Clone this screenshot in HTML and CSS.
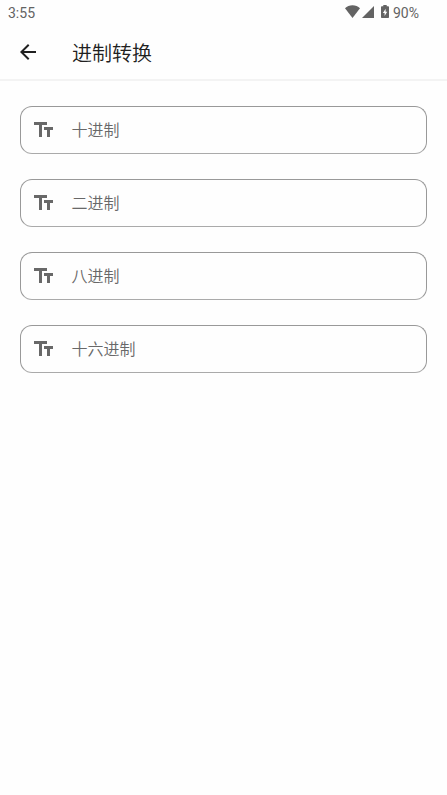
FILE: index.html
```html
<!DOCTYPE html>
<html lang="zh-CN">
<head>
<meta charset="utf-8">
<title>进制转换</title>
<link rel="stylesheet" href="styles.css">
</head>
<body>
<svg class="defs" aria-hidden="true"><symbol id="text-fields" viewBox="0 0 24 24"><path d="M3 4v3h5v12h3V7h5V4H3zm19 5h-9v3h3v7h3v-7h3V9z"/></symbol></svg>
<div class="status">
  <span class="clock">3:55</span>
  <svg class="wifi" viewBox="0 0 15 13"><path d="M7.500 13L0 3.200C1.900 1.300 4.600 .3 7.500 .3s5.600 1 7.500 2.900z"/></svg>
  <svg class="signal" viewBox="0 0 12 12"><path d="M12 0v12H0z"/></svg>
  <svg class="battery" viewBox="0 0 8 13"><path fill-rule="evenodd" d="M2.300 0h3.400v1.300H7.200q.8 0 .8.800v10.100q0 .8-.8.800H.8q-.8 0-.8-.8V2.100q0-.8.8-.8h1.500zM4.600 3.700L1.900 8h1.700v3L6.200 6.800H4.600z"/></svg>
  <span class="level">90%</span>
</div>
<header class="appbar">
  <svg class="back" viewBox="0 0 24 24"><path d="M20 11H7.830l5.590-5.590L12 4l-8 8 8 8 1.410-1.410L7.830 13H20z"/></svg>
  <h1>进制转换</h1>
</header>
<main class="fields">
  <div class="field"><svg class="icon"><use href="#text-fields"/></svg><span>十进制</span></div>
  <div class="field"><svg class="icon"><use href="#text-fields"/></svg><span>二进制</span></div>
  <div class="field"><svg class="icon"><use href="#text-fields"/></svg><span>八进制</span></div>
  <div class="field"><svg class="icon"><use href="#text-fields"/></svg><span>十六进制</span></div>
</main>
</body>
</html>
```
FILE: styles.css
```css
* { box-sizing: border-box; }
body {
  margin: 0;
  height: 795px;
  overflow: hidden;
  background: #fefefe;
  font-family: Roboto, "Noto Sans CJK SC", sans-serif;
}
svg { display: block; flex: none; }
.defs { display: none; }
.status {
  display: flex;
  align-items: center;
  height: 24px;
  padding: 0 28px 0 8px;
  color: #636363;
  fill: #636363;
  line-height: 24px;
}
.clock, .level { font-size: 14px; padding-top: 2px; }
.clock { margin-right: auto; }
.wifi { width: 15px; height: 13px; margin-bottom: 1px; }
.signal { width: 12px; height: 12px; margin-left: 2px; }
.battery { width: 8px; height: 13px; margin: 0 4px 1px 7px; }
.appbar {
  display: flex;
  align-items: center;
  height: 57px;
  padding-left: 16px;
  border-bottom: 2px solid #f3f3f3;
}
.back { width: 24px; height: 24px; fill: #202020; }
h1 {
  margin: 0 0 0 32px;
  padding-top: 2px;
  font-family: "Noto Sans CJK SC", sans-serif;
  font-size: 20px;
  line-height: 28px;
  font-weight: 350;
  color: #202020;
}
.fields {
  display: grid;
  gap: 25px;
  padding: 25px 20px;
}
.field {
  display: flex;
  align-items: center;
  height: 48px;
  padding-left: 10px;
  border: 1px solid #999;
  border-bottom-color: #aaa;
  border-radius: 12px;
  color: #686868;
  font-family: "Noto Sans CJK SC", sans-serif;
  font-size: 16px;
  line-height: 24px;
  font-weight: 350;
}
.field span { padding-bottom: 2px; }
.icon { width: 24px; height: 24px; margin-right: 16.5px; fill: #686868; }
```
